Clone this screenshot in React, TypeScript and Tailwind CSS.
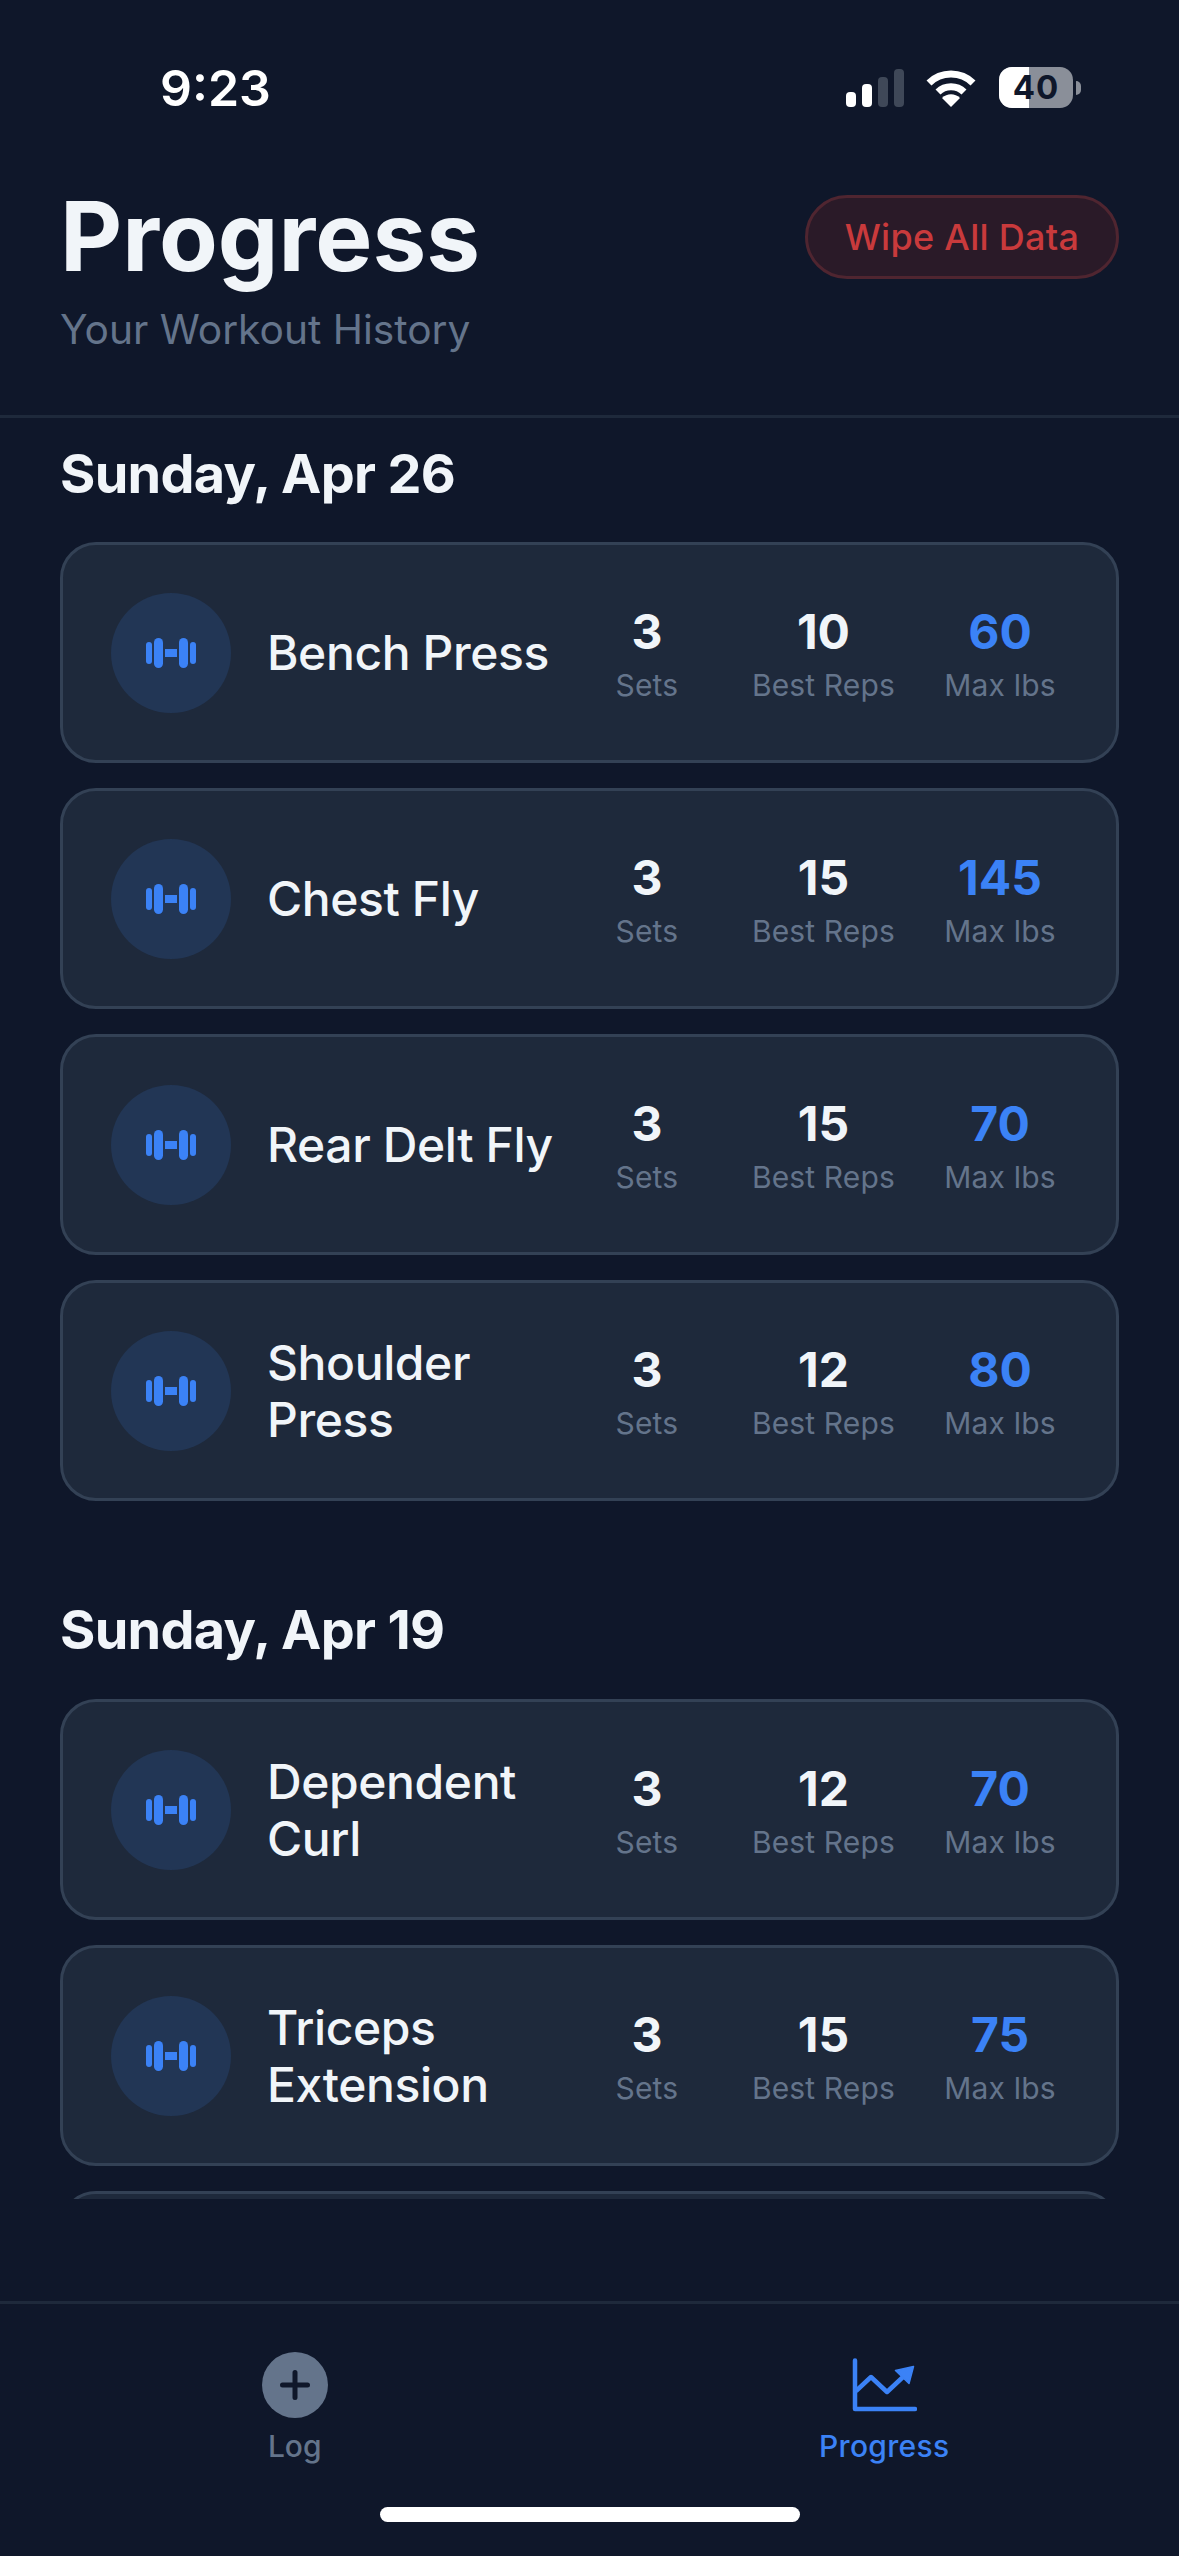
const font = { fontFamily: "Inter, sans-serif" };

function Dumbbell() {
  return (
    <svg width="50" height="30" viewBox="0 0 50 30" fill="#3b82f6">
      <rect x="0" y="4" width="6" height="22" rx="3" />
      <rect x="8" y="0" width="9" height="30" rx="4.5" />
      <rect x="19" y="11" width="12" height="8" />
      <rect x="33" y="0" width="9" height="30" rx="4.5" />
      <rect x="44" y="4" width="6" height="22" rx="3" />
    </svg>
  );
}

function Stat({ value, label, blue }: { value: string; label: string; blue?: boolean }) {
  return (
    <div className="flex min-w-[136px] flex-col items-center">
      <div className={`text-[48px] font-bold leading-[57px] ${blue ? "text-[#3b82f6]" : "text-[#f1f5f9]"}`}>{value}</div>
      <div className="mt-[7px] text-[30px] leading-[36px] tracking-[0.15px] text-[#64748b]">{label}</div>
    </div>
  );
}

function Card({ name, sets, reps, max }: { name: string; sets: string; reps: string; max: string }) {
  return (
    <div className="flex h-[221px] shrink-0 items-center rounded-[36px] border-[3px] border-[#334155] bg-[#1e293b] px-[48px]">
      <div className="flex h-[120px] w-[120px] shrink-0 items-center justify-center rounded-full bg-[#223655]">
        <Dumbbell />
      </div>
      <div className="ml-[36px] min-w-0 flex-1 text-[48px] font-medium leading-[57px] tracking-[-0.4px] text-[#f1f5f9]">{name}</div>
      <div className="flex shrink-0 items-center gap-[37px]">
        <Stat value={sets} label="Sets" />
        <Stat value={reps} label="Best Reps" />
        <Stat value={max} label="Max lbs" blue />
      </div>
    </div>
  );
}

function StatusIcons() {
  return (
    <div className="flex items-center">
      <svg width="58" height="38" viewBox="0 0 58 38">
        <rect x="0" y="23" width="10" height="15" rx="4" fill="#ffffff" />
        <rect x="16" y="15" width="10" height="23" rx="4" fill="#ffffff" />
        <rect x="32" y="8" width="10" height="30" rx="4" fill="#3f4858" />
        <rect x="48" y="0" width="10" height="38" rx="4" fill="#3f4858" />
      </svg>
      <svg className="ml-[22px]" width="50" height="38" viewBox="0 0 50 38" fill="none" stroke="#ffffff" strokeWidth="7">
        <path d="M3 14 C15 2 35 2 47 14" />
        <path d="M12 23 C19 16 31 16 38 23" />
        <path d="M16 29 L25 38 L34 29 C29 24 21 24 16 29 Z" fill="#ffffff" stroke="none" />
      </svg>
      <div className="relative ml-[23px] flex h-[41px] w-[74px] items-center justify-center overflow-hidden rounded-[13px] bg-[#8a8f99]">
        <div className="absolute bottom-0 left-0 top-0 w-[30px] bg-white" />
        <span className="relative text-[33px] font-bold leading-none tracking-[1px] text-[#0f172a]">40</span>
      </div>
      <div className="ml-[3px] h-[14px] w-[5px] rounded-r-full bg-[#8a8f99]" />
    </div>
  );
}

export default function App() {
  return (
    <div className="flex h-[2556px] w-[1179px] flex-col overflow-hidden bg-[#0f172a]" style={font}>
      <div className="flex h-[182px] shrink-0 items-start justify-between pl-[160px] pr-[98px] pt-[60px]">
        <div className="text-[50px] font-semibold leading-[56px] text-white">9:23</div>
        <div className="pt-[7px]"><StatusIcons /></div>
      </div>
      <div className="flex h-[236px] shrink-0 items-start justify-between border-b-[3px] border-[#1e293b] pl-[60px] pr-[60px]">
        <div>
          <div className="text-[96px] font-bold leading-[108px] text-[#f1f5f9]">Progress</div>
          <div className="mt-[15px] text-[40.7px] leading-[50px] text-[#64748b]">Your Workout History</div>
        </div>
        <div className="mt-[13px] flex h-[84px] w-[314px] items-center justify-center rounded-full border-[3px] border-[#4f2530] bg-[#2a1a28] text-[36px] font-medium tracking-[0.3px] text-[#c93a3c]">
          Wipe All Data
        </div>
      </div>
      <div className="h-[1781px] shrink-0 overflow-hidden px-[60px]">
        <div className="mt-[28px] text-[54px] font-bold leading-[56px] tracking-[-0.7px] text-[#f1f5f9]">Sunday, Apr 26</div>
        <div className="mt-[40px] flex flex-col gap-[25px]">
          <Card name="Bench Press" sets="3" reps="10" max="60" />
          <Card name="Chest Fly" sets="3" reps="15" max="145" />
          <Card name="Rear Delt Fly" sets="3" reps="15" max="70" />
          <Card name="Shoulder Press" sets="3" reps="12" max="80" />
        </div>
        <div className="mt-[101px] text-[54px] font-bold leading-[56px] tracking-[-0.7px] text-[#f1f5f9]">Sunday, Apr 19</div>
        <div className="mt-[41px] flex flex-col gap-[25px]">
          <Card name="Dependent Curl" sets="3" reps="12" max="70" />
          <Card name="Triceps Extension" sets="3" reps="15" max="75" />
          <div className="h-[221px] shrink-0 rounded-[36px] border-[3px] border-[#334155] bg-[#1e293b]" />
        </div>
      </div>
      <div className="mt-[102px] flex flex-1 flex-col border-t-[3px] border-[#1e293b]">
        <div className="flex pt-[48px]">
          <div className="flex flex-1 flex-col items-center">
            <svg width="66" height="66" viewBox="0 0 66 66">
              <circle cx="33" cy="33" r="33" fill="#64748b" />
              <path d="M33 20.5 V45.5 M20.5 33 H45.5" stroke="#0f172a" strokeWidth="5" strokeLinecap="round" />
            </svg>
            <div className="mt-[10px] text-[30px] font-medium leading-[36px] text-[#64748b]">Log</div>
          </div>
          <div className="flex flex-1 flex-col items-center">
            <svg width="66" height="66" viewBox="11 12 66 66" fill="none">
              <path d="M15 20.5 V69 H75" stroke="#3b82f6" strokeWidth="4.5" strokeLinecap="round" strokeLinejoin="round" />
              <path d="M16 51 L31 37 L47 52 L63 37" stroke="#3b82f6" strokeWidth="4.5" strokeLinejoin="round" />
              <path d="M73.5 26.5 L55.5 30.5 L69 43.5 Z" fill="#3b82f6" stroke="#3b82f6" strokeWidth="1.5" strokeLinejoin="round" />
            </svg>
            <div className="mt-[10px] text-[30px] font-medium leading-[36px] tracking-[0.3px] text-[#3b82f6]">Progress</div>
          </div>
        </div>
        <div className="mx-auto mt-[43px] h-[15px] w-[420px] rounded-full bg-white" />
      </div>
    </div>
  );
}
